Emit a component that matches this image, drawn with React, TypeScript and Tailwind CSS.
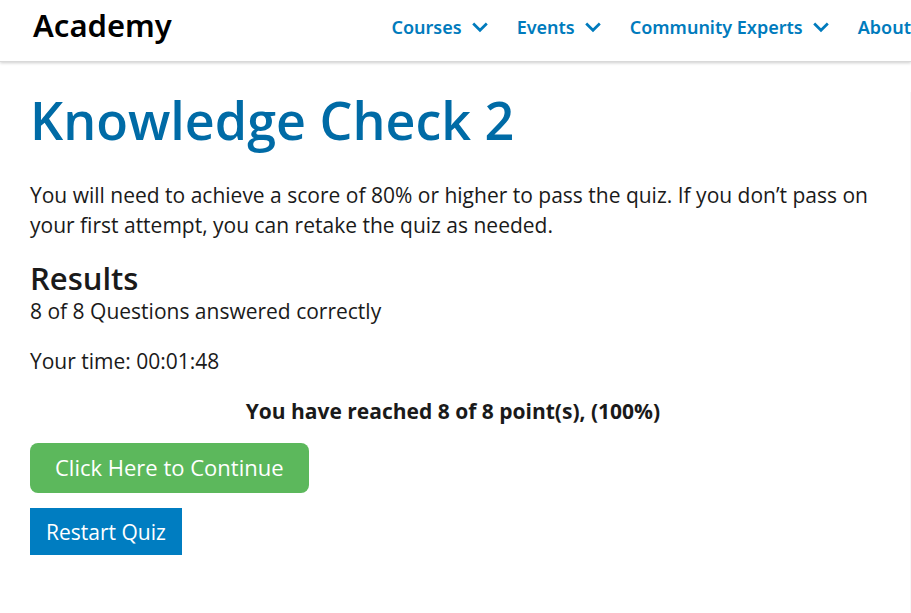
const links = ["Courses", "Events", "Community Experts"];

function Chevron() {
  return (
    <svg width="16" height="11" viewBox="0 0 16 11" fill="none" aria-hidden="true">
      <path d="M1.2 1.5 8 8.3l6.8-6.8" stroke="currentColor" strokeWidth="2.7" />
    </svg>
  );
}

export default function App() {
  return (
    <div className="flex min-h-screen flex-col overflow-x-hidden bg-white font-['Open_Sans',sans-serif] text-[#1a1a1a]">
      <header className="flex h-[62px] items-start justify-between overflow-hidden border-b border-[#d9d9d9] pl-[33px] shadow-[0_1px_3px_rgba(0,0,0,0.2)]">
        <a href="#" className="pt-[3px] font-['Noto_Sans',sans-serif] text-[31px] leading-[44px] font-semibold text-black">Academy</a>
        <nav className="flex shrink-0 gap-[29px] pt-[15px] font-['Noto_Sans',sans-serif] text-lg leading-6 font-semibold whitespace-nowrap text-[#007bbd]">
          {links.map((label) => (
            <button key={label} type="button" className="flex items-center gap-2.5">
              {label}
              <Chevron />
            </button>
          ))}
          <a href="#">About</a>
        </nav>
      </header>
      <div className="flex grow">
        <main className="grow pt-[23px] pr-[34px] pl-[30px] text-[21px] leading-[30px]">
          <h1 className="text-[52px] leading-[70px] font-semibold text-[#006ba6]">Knowledge Check 2</h1>
          <p className="mt-[25px]">
            You will need to achieve a score of 80% or higher to pass the quiz. If you don’t pass on your first attempt, you can retake the quiz as needed.
          </p>
          <h2 className="mt-5 text-[31px] leading-9 font-semibold">Results</h2>
          <p>8 of 8 Questions answered correctly</p>
          <p className="mt-5">Your time: 00:01:48</p>
          <p className="mt-5 text-center font-bold">You have reached 8 of 8 point(s), (100%)</p>
          <div className="mt-[17px] flex flex-col items-start gap-[15px] text-white">
            <button type="button" className="h-[50px] rounded-lg bg-[#5cb85c] px-[25px] pb-0.5 text-[22px]">Click Here to Continue</button>
            <button type="button" className="h-[47px] bg-[#007dc1] px-4 text-[21px]">Restart Quiz</button>
          </div>
        </main>
        <div className="mt-[30px] w-0.5 bg-[#f8f8f8]" />
      </div>
    </div>
  );
}
